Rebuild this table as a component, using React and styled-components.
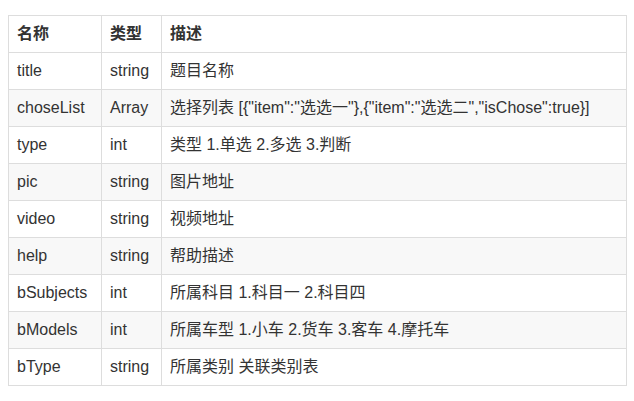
import React from 'react';
import styled, { createGlobalStyle } from 'styled-components';

const GlobalStyle = createGlobalStyle`
    body {
        margin: 0;
        background: #fff;
        font-family: Arial, "Liberation Sans", "Noto Sans CJK SC", sans-serif;
        color: #333;
    }
`;

const Page = styled.div`
    padding: 15px 8px 0 8px;
`;

const Table = styled.table`
    width: 619px;
    border-collapse: collapse;
    table-layout: fixed;
    font-size: 16px;
    line-height: 24px;
`;

const Row = styled.tr`
    background: ${(p) => (p.striped ? '#f8f8f8' : '#fff')};
`;

const HeadCell = styled.th`
    border: 1px solid #ddd;
    padding: 6px 8px;
    text-align: left;
    font-weight: bold;
`;

const Cell = styled.td`
    border: 1px solid #ddd;
    padding: 6px 8px;
    white-space: nowrap;
`;

const rows = [
    ['title', 'string', '题目名称'],
    ['choseList', 'Array', '选择列表 [{"item":"选选一"},{"item":"选选二","isChose":true}]'],
    ['type', 'int', '类型 1.单选 2.多选 3.判断'],
    ['pic', 'string', '图片地址'],
    ['video', 'string', '视频地址'],
    ['help', 'string', '帮助描述'],
    ['bSubjects', 'int', '所属科目 1.科目一 2.科目四'],
    ['bModels', 'int', '所属车型 1.小车 2.货车 3.客车 4.摩托车'],
    ['bType', 'string', '所属类别 关联类别表'],
];

const App = () => (
    <Page>
        <GlobalStyle />
        <Table>
            <colgroup>
                <col style={{ width: 93 }} />
                <col style={{ width: 60 }} />
                <col />
            </colgroup>
            <thead>
                <Row>
                    <HeadCell>名称</HeadCell>
                    <HeadCell>类型</HeadCell>
                    <HeadCell>描述</HeadCell>
                </Row>
            </thead>
            <tbody>
                {rows.map((r, i) => (
                    <Row key={r[0]} striped={i % 2 === 1}>
                        <Cell>{r[0]}</Cell>
                        <Cell>{r[1]}</Cell>
                        <Cell>{r[2]}</Cell>
                    </Row>
                ))}
            </tbody>
        </Table>
    </Page>
);

export default App;
